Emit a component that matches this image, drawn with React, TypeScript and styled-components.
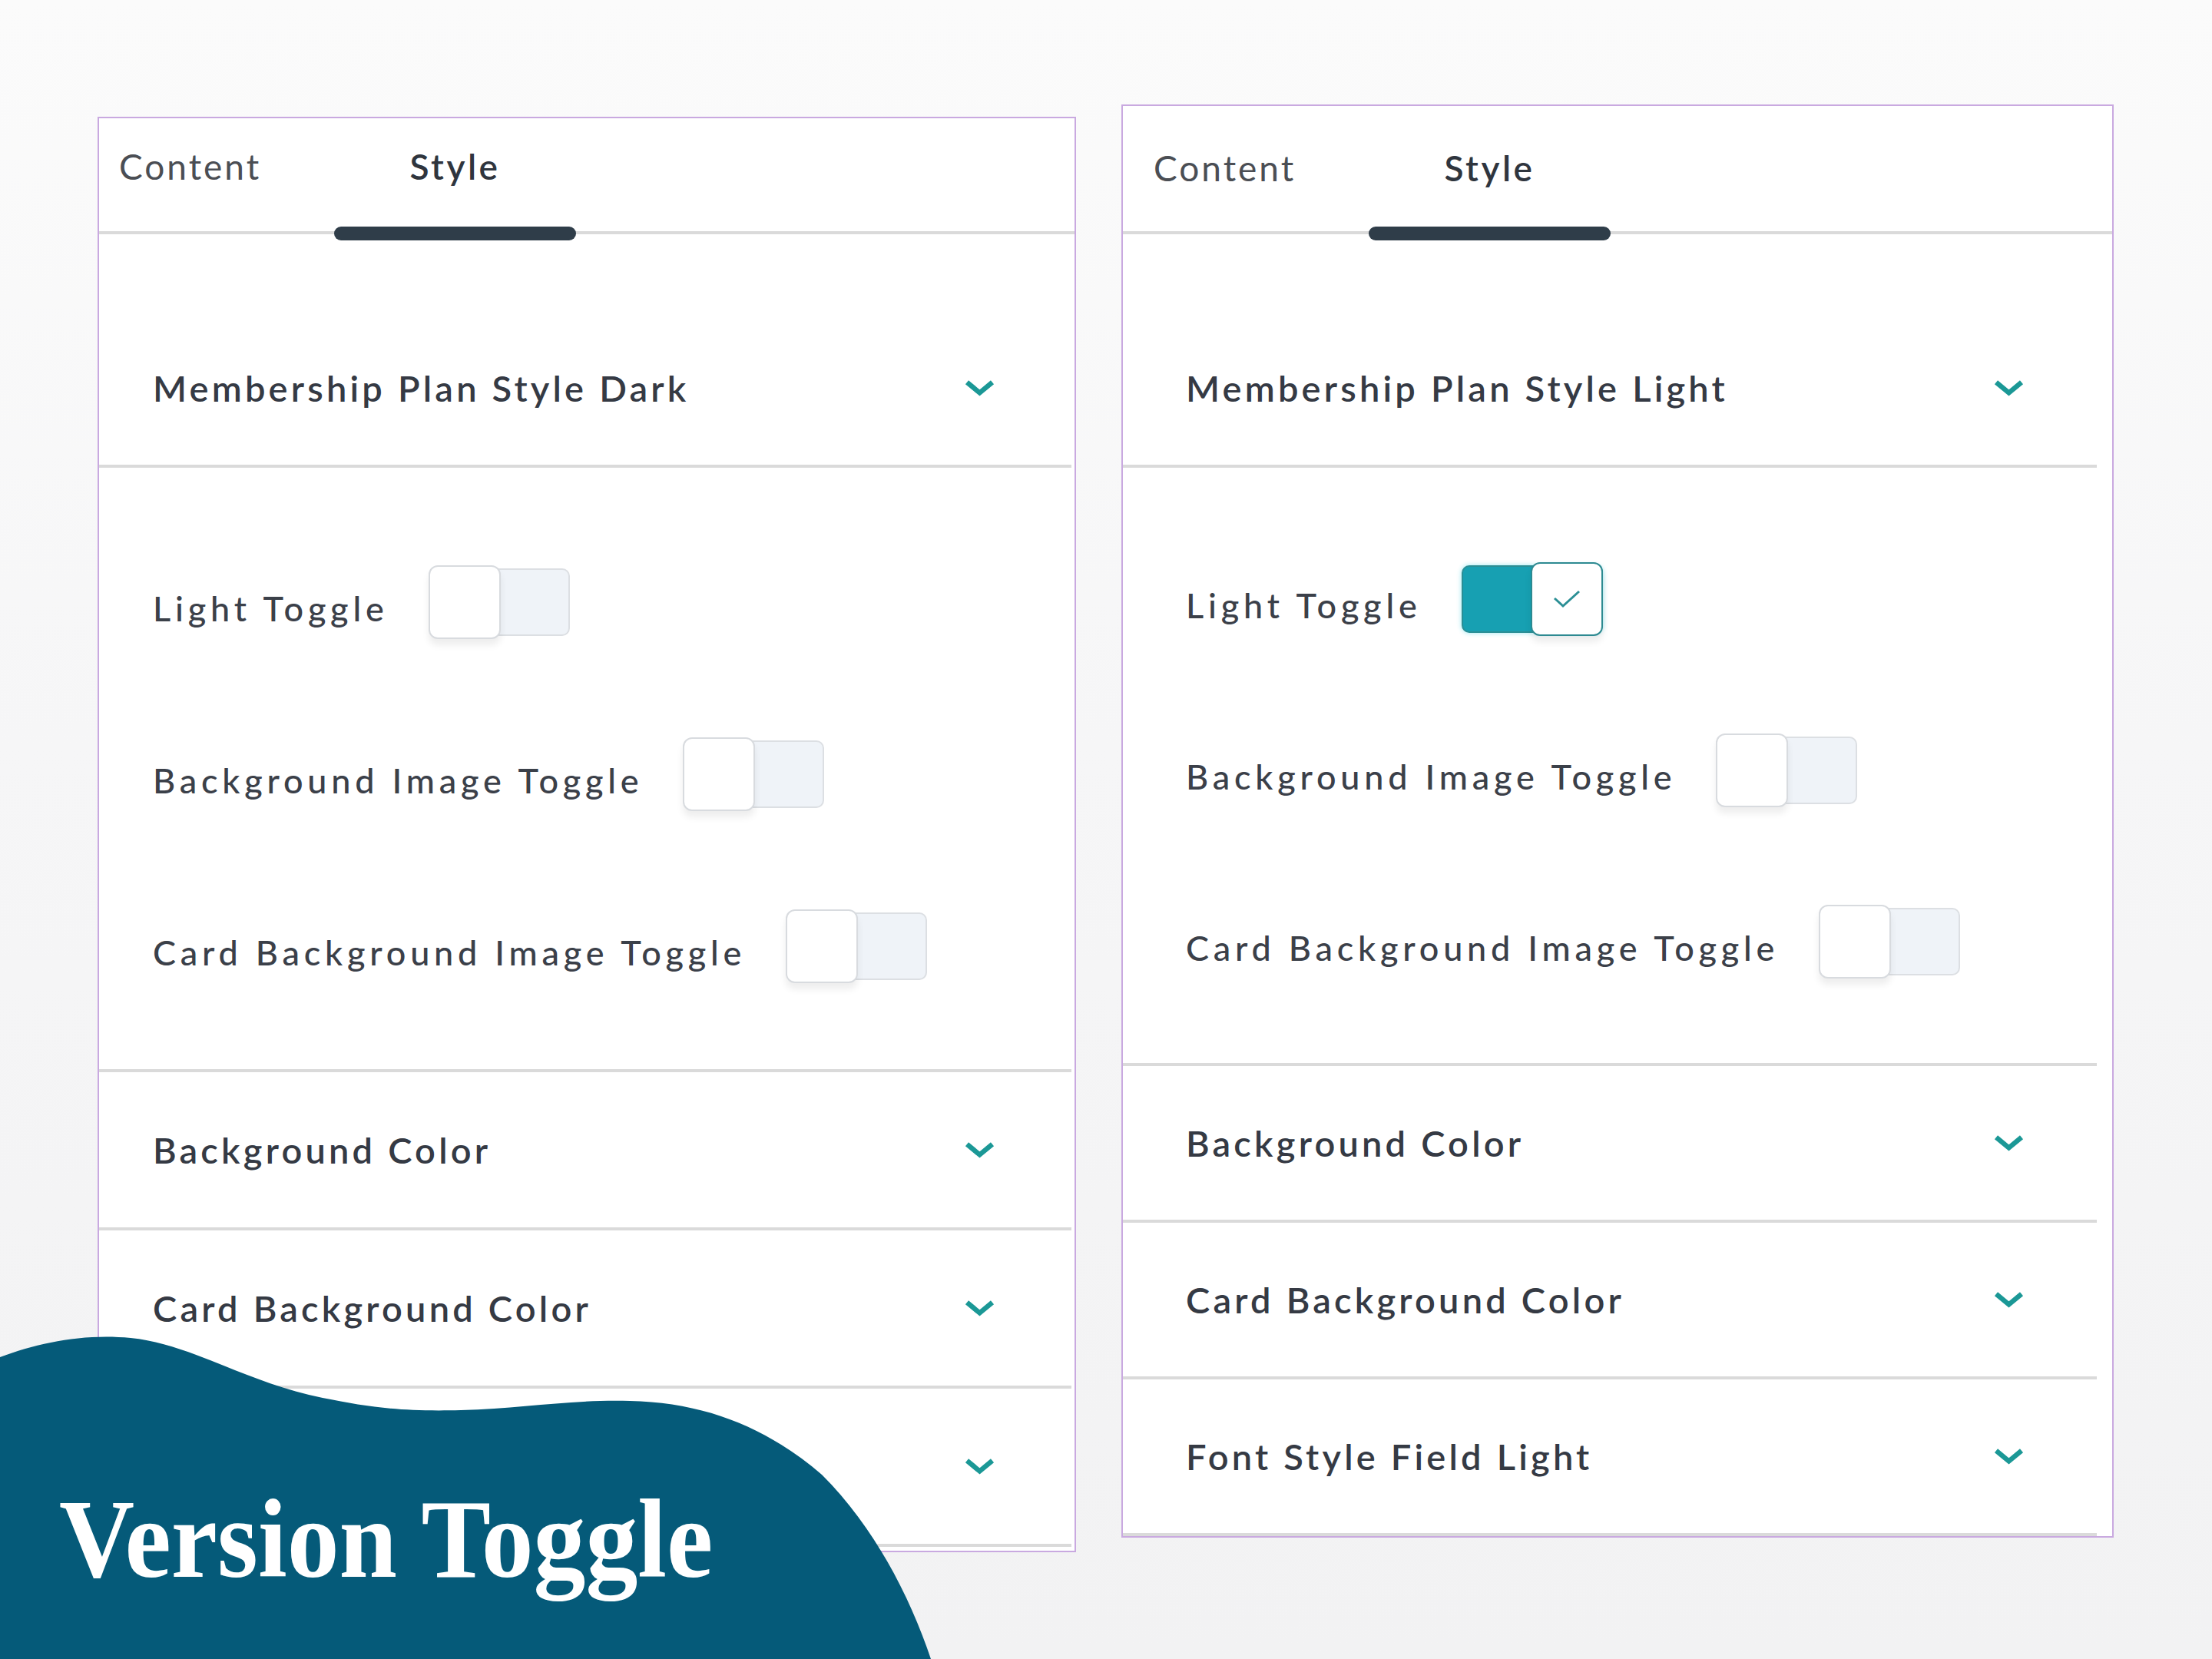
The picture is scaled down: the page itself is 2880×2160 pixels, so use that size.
import styled, { createGlobalStyle } from "styled-components";

const GlobalStyle = createGlobalStyle`
  html, body {
    margin: 0;
    padding: 0;
  }
  body {
    width: 2880px;
    height: 2160px;
    overflow: hidden;
    font-family: "Lato", "Noto Sans", sans-serif;
  }
`;

type PanelData = {
  top: number;
  width: number;
  tabHeight: number;
  tabPadTop: number;
  tabPadLeft: number;
  inset: [number, number];
  dividerGap: number;
  toggleGap: number;
  togglePad: [number, number];
  rowHeight: number;
  bottomPad: number;
  heading: string;
  lightOn: boolean;
  sections: string[];
};

// the last row of the dark panel sits under the banner, its title is not visible
const panels: PanelData[] = [
  {
    top: 152,
    width: 1274,
    tabHeight: 151,
    tabPadTop: 40,
    tabPadLeft: 26,
    inset: [70, 102],
    dividerGap: 4,
    toggleGap: 128,
    togglePad: [127, 112],
    rowHeight: 202,
    bottomPad: 5,
    heading: "Membership Plan Style Dark",
    lightOn: false,
    sections: ["Background Color", "Card Background Color", ""],
  },
  {
    top: 136,
    width: 1292,
    tabHeight: 167,
    tabPadTop: 58,
    tabPadLeft: 40,
    inset: [82, 113],
    dividerGap: 20,
    toggleGap: 127,
    togglePad: [123, 110],
    rowHeight: 200,
    bottomPad: 0,
    heading: "Membership Plan Style Light",
    lightOn: true,
    sections: ["Background Color", "Card Background Color", "Font Style Field Light"],
  },
];

const toggles = ["Light Toggle", "Background Image Toggle", "Card Background Image Toggle"];

function Chevron() {
  return (
    <ChevronIcon viewBox="0 0 44 24">
      <polyline points="4,4 22,19 40,4" fill="none" stroke="#1b9896" strokeWidth={7} />
    </ChevronIcon>
  );
}

function Toggle({ on }: { on: boolean }) {
  return (
    <Switch $on={on}>
      <Knob $on={on}>
        {on && (
          <svg width="40" height="28" viewBox="0 0 40 28">
            <polyline points="4,13 15,23 36,4" fill="none" stroke="#2b8f95" strokeWidth={3} />
          </svg>
        )}
      </Knob>
    </Switch>
  );
}

function SettingsPanel({ data }: { data: PanelData }) {
  return (
    <Panel $top={data.top} $width={data.width}>
      <TabBar $height={data.tabHeight} $padTop={data.tabPadTop} $padLeft={data.tabPadLeft}>
        <Tab $width={280}>Content</Tab>
        <Tab $width={315} $active>
          Style
          <TabIndicator />
        </Tab>
      </TabBar>

      <Body>
        <AccordionHeader $height={200} $inset={data.inset}>
          <SectionTitle>{data.heading}</SectionTitle>
          <Chevron />
        </AccordionHeader>
        <Divider $gap={data.dividerGap} />

        <ToggleList $gap={data.toggleGap} $pad={data.togglePad} $inset={data.inset}>
          {toggles.map((label, i) => (
            <ToggleRow key={label}>
              <ToggleLabel>{label}</ToggleLabel>
              <Toggle on={data.lightOn && i === 0} />
            </ToggleRow>
          ))}
        </ToggleList>
        <Divider $gap={data.dividerGap} />

        {data.sections.map((title, i) => (
          <div key={i}>
            <AccordionHeader $height={data.rowHeight} $inset={data.inset}>
              <SectionTitle>{title}</SectionTitle>
              <Chevron />
            </AccordionHeader>
            <Divider $gap={data.dividerGap} />
          </div>
        ))}
      </Body>
      <BottomSpace $h={data.bottomPad} />
    </Panel>
  );
}

export default function App() {
  return (
    <>
      <GlobalStyle />
      <Page>
        {panels.map((p) => (
          <SettingsPanel key={p.heading} data={p} />
        ))}

        <Banner>
          <Blob viewBox="0 0 1220 420" preserveAspectRatio="none">
            <path
              d="M0 27 C50 8 110 -4 170 2 C250 10 320 60 420 80 C480 92 520 98 600 96 C680 94 740 82 820 84 C920 86 1000 120 1070 180 C1140 250 1185 340 1212 420 L0 420 Z"
              fill="#055a79"
            />
          </Blob>
          <BannerTitle>Version Toggle</BannerTitle>
        </Banner>
      </Page>
    </>
  );
}

const Page = styled.main`
  position: relative;
  width: 2880px;
  height: 2160px;
  box-sizing: border-box;
  overflow: hidden;
  display: flex;
  align-items: flex-start;
  gap: 59px;
  padding-left: 127px;
  background: linear-gradient(180deg, #fbfbfb 0%, #f6f6f7 45%, #f2f2f3 100%);
`;

const Panel = styled.section<{ $top: number; $width: number }>`
  margin-top: ${(p) => p.$top}px;
  width: ${(p) => p.$width}px;
  box-sizing: border-box;
  border: 2px solid #c9a9e0;
  background: #fff;
  display: flex;
  flex-direction: column;
`;

const TabBar = styled.div<{ $height: number; $padTop: number; $padLeft: number }>`
  display: flex;
  height: ${(p) => p.$height}px;
  box-sizing: border-box;
  padding: ${(p) => p.$padTop}px 0 0 ${(p) => p.$padLeft}px;
  border-bottom: 4px solid #dadada;
`;

const Tab = styled.div<{ $width: number; $active?: boolean }>`
  position: relative;
  width: ${(p) => p.$width}px;
  text-align: ${(p) => (p.$active ? "center" : "left")};
  font-size: 46px;
  line-height: 46px;
  letter-spacing: ${(p) => (p.$active ? 3.5 : 3)}px;
  font-weight: ${(p) => (p.$active ? 600 : 400)};
  color: ${(p) => (p.$active ? "#2f353e" : "#4b4e54")};
`;

const TabIndicator = styled.span`
  position: absolute;
  left: 0;
  right: 0;
  bottom: -12px;
  height: 18px;
  border-radius: 9px;
  background: #2f3d49;
`;

const Body = styled.div`
  padding-top: 100px;
  display: flex;
  flex-direction: column;
`;

const AccordionHeader = styled.div<{ $height: number; $inset: [number, number] }>`
  height: ${(p) => p.$height}px;
  display: flex;
  align-items: center;
  justify-content: space-between;
  padding: 0 ${(p) => p.$inset[1]}px 0 ${(p) => p.$inset[0]}px;
`;

const SectionTitle = styled.span`
  font-size: 47px;
  line-height: 47px;
  letter-spacing: 4.2px;
  font-weight: 600;
  color: #353a44;
`;

const ChevronIcon = styled.svg`
  width: 43px;
  height: 22px;
  flex-shrink: 0;
`;

const Divider = styled.div<{ $gap: number }>`
  height: 4px;
  margin-right: ${(p) => p.$gap}px;
  background: #dadada;
`;

const ToggleList = styled.div<{ $gap: number; $pad: [number, number]; $inset: [number, number] }>`
  display: flex;
  flex-direction: column;
  gap: ${(p) => p.$gap}px;
  padding: ${(p) => p.$pad[0]}px 0 ${(p) => p.$pad[1]}px ${(p) => p.$inset[0]}px;
`;

const ToggleRow = styled.div`
  height: 96px;
  display: flex;
  align-items: center;
  gap: 52px;
`;

const ToggleLabel = styled.span`
  font-size: 45px;
  line-height: 45px;
  letter-spacing: 5.8px;
  font-weight: 500;
  color: #3b4049;
  margin-top: 16px;
`;

const Switch = styled.div<{ $on: boolean }>`
  position: relative;
  width: 184px;
  height: 88px;
  box-sizing: border-box;
  flex-shrink: 0;
  border: 2px solid ${(p) => (p.$on ? "#2b8e95" : "#dcdfe3")};
  border-radius: 10px;
  background: ${(p) => (p.$on ? "#17a0b2" : "#eff3f8")};
  box-shadow: ${(p) => (p.$on ? "0 0 6px rgba(23, 200, 220, 0.45)" : "none")};
`;

const Knob = styled.span<{ $on: boolean }>`
  position: absolute;
  top: -6px;
  left: ${(p) => (p.$on ? 88 : -2)}px;
  width: 94px;
  height: 96px;
  box-sizing: border-box;
  border: 2px solid ${(p) => (p.$on ? "#2d8a91" : "#d8dbdf")};
  border-radius: 12px;
  background: #fff;
  box-shadow: 0 8px 10px rgba(0, 0, 0, 0.07);
  display: flex;
  align-items: center;
  justify-content: center;
`;

const BottomSpace = styled.div<{ $h: number }>`
  height: ${(p) => p.$h}px;
`;

const Banner = styled.div`
  position: absolute;
  left: 0;
  bottom: 0;
  width: 1220px;
  height: 420px;
  z-index: 2;
`;

const Blob = styled.svg`
  position: absolute;
  inset: 0;
  width: 100%;
  height: 100%;
`;

const BannerTitle = styled.h1`
  position: absolute;
  left: 77px;
  top: 191px;
  margin: 0;
  font-family: "Liberation Serif", "DejaVu Serif", serif;
  font-weight: 700;
  font-size: 146px;
  line-height: 1;
  letter-spacing: 0;
  color: #fff;
  white-space: nowrap;
  transform: scaleX(0.93);
  transform-origin: left top;
`;
